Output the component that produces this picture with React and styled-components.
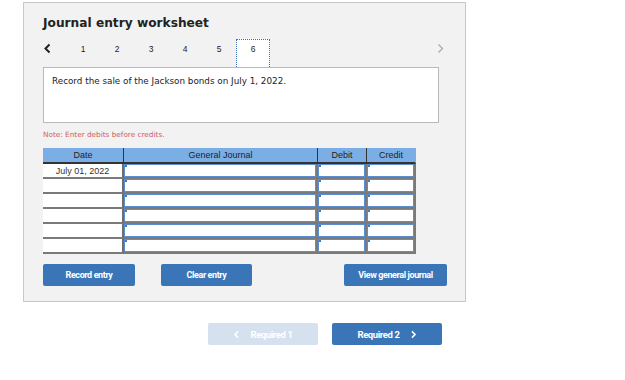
import React from 'react'
import styled, { createGlobalStyle } from 'styled-components'

const GlobalStyle = createGlobalStyle`
  body {
    margin: 0;
    background: #ffffff;
    font-family: "DejaVu Sans", Verdana, sans-serif;
  }
`

const Page = styled.div`
  width: 625px;
  height: 380px;
  padding: 2px 0 0 23px;
  box-sizing: border-box;
`

const Panel = styled.div`
  width: 443px;
  height: 300px;
  box-sizing: border-box;
  background: #f2f2f2;
  border: 1px solid #c8c8c8;
  padding: 12px 26px 0 19px;
`

const Title = styled.div`
  font-family: "DejaVu Sans", Verdana, sans-serif;
  font-weight: bold;
  font-size: 12.2px;
  color: #222;
  line-height: 16px;
  height: 24px;
`

const Tabs = styled.div`
  display: flex;
  align-items: flex-start;
  height: 28px;
`

const Chevron = styled.div`
  width: 23px;
  height: 28px;
  display: flex;
  align-items: flex-start;
  padding-top: 4px;
  box-sizing: border-box;
  color: ${p => (p.muted ? '#a8a8a8' : '#222')};
  svg { display: block; }
`

const Tab = styled.div`
  width: 34px;
  height: 28px;
  box-sizing: border-box;
  font-family: "Liberation Sans", Arial, sans-serif;
  font-size: 8.5px;
  color: #222;
  text-align: center;
  padding-top: 4px;
  background: ${p => (p.active ? '#ffffff' : 'transparent')};
  border: 1px ${p => (p.active ? 'dotted #3b6fb0' : 'solid transparent')};
  border-bottom: none;
`

const NextChevron = styled(Chevron)`
  margin-left: auto;
  width: auto;
  margin-right: -6px;
`

const Prompt = styled.div`
  height: 56px;
  box-sizing: border-box;
  background: #ffffff;
  border: 1px solid #b9b9b9;
  padding: 8px 8px;
  font-size: 8.8px;
  color: #222;
`

const Note = styled.div`
  margin-top: 7px;
  height: 18px;
  font-size: 7.3px;
  color: #d0605d;
`

const Grid = styled.div`
  display: grid;
  grid-template-columns: 81px 194px 49px 49px;
  width: 373px;
`

const Head = styled.div`
  height: 16px;
  box-sizing: border-box;
  background: #7aaee4;
  border-right: 1px solid ${p => (p.last ? 'transparent' : '#333')};
  border-bottom: 2px solid #333;
  font-family: "Liberation Sans", Arial, sans-serif;
  font-size: 9px;
  color: #222;
  text-align: center;
  line-height: 14px;
`

const DateCell = styled.div`
  height: 15px;
  box-sizing: border-box;
  background: #ffffff;
  border-right: 2px solid #6e6e6e;
  border-bottom: 2px solid #7a7a7a;
  font-family: "Liberation Sans", Arial, sans-serif;
  font-size: 9px;
  color: #333;
  text-align: center;
  line-height: 14px;
`

const InputCell = styled.div`
  height: 15px;
  box-sizing: border-box;
  border-right: 2px solid #7a7a7a;
  border-bottom: 2px solid #7a7a7a;
  display: flex;
  position: relative;
`

const Field = styled.div`
  flex: 1;
  background: #ffffff;
  border: 1px solid #5b8fd0;
`

const Marker = styled.span`
  position: absolute;
  left: 1px;
  top: 1px;
  width: 2px;
  height: 2px;
  background: #3b7bd0;
`

const Actions = styled.div`
  display: flex;
  margin-top: 10px;
  width: 404px;
`

const Button = styled.button`
  width: ${p => p.w}px;
  height: 22px;
  margin-left: ${p => p.gap || 0}px;
  border: none;
  border-radius: 2px;
  background: ${p => (p.disabled ? '#d5e1ef' : '#3a75b8')};
  color: #ffffff;
  font-family: Roboto, "Liberation Sans", Arial, sans-serif;
  font-weight: bold;
  font-size: ${p => p.fs || 9}px;
  letter-spacing: -0.4px;
  padding: 0;
  display: flex;
  align-items: center;
  justify-content: center;
  gap: 10px;
  svg { display: block; }
`

const Spacer = styled.div`
  flex: 1;
`

const Footer = styled.div`
  display: flex;
  gap: 14px;
  padding-left: 185px;
  margin-top: 21px;
`

const LeftArrow = ({ size = 9, stroke = 2 }) => (
  <svg width={size} height={size + 2} viewBox="0 0 9 11">
    <path d="M6.5 1.5 L2.5 5.5 L6.5 9.5" fill="none" stroke="currentColor" strokeWidth={stroke} />
  </svg>
)

const RightArrow = ({ size = 9, stroke = 2 }) => (
  <svg width={size} height={size + 2} viewBox="0 0 9 11">
    <path d="M2.5 1.5 L6.5 5.5 L2.5 9.5" fill="none" stroke="currentColor" strokeWidth={stroke} />
  </svg>
)

const rows = ['July 01, 2022', '', '', '', '', '']

export default function App() {
  return (
    <Page>
      <GlobalStyle />
      <Panel>
        <Title>Journal entry worksheet</Title>
        <Tabs>
          <Chevron><LeftArrow /></Chevron>
          {[1, 2, 3, 4, 5, 6].map(n => (
            <Tab key={n} active={n === 6}>{n}</Tab>
          ))}
          <NextChevron muted><RightArrow stroke={1.2} /></NextChevron>
        </Tabs>
        <Prompt>Record the sale of the Jackson bonds on July 1, 2022.</Prompt>
        <Note>Note: Enter debits before credits.</Note>
        <Grid>
          <Head>Date</Head>
          <Head>General Journal</Head>
          <Head>Debit</Head>
          <Head last>Credit</Head>
          {rows.map((d, i) => (
            <React.Fragment key={i}>
              <DateCell>{d}</DateCell>
              <InputCell><Field /><Marker /></InputCell>
              <InputCell><Field /><Marker /></InputCell>
              <InputCell><Field /><Marker /></InputCell>
            </React.Fragment>
          ))}
        </Grid>
        <Actions>
          <Button w={92}>Record entry</Button>
          <Button w={91} gap={26}>Clear entry</Button>
          <Spacer />
          <Button w={103}>View general journal</Button>
        </Actions>
      </Panel>
      <Footer>
        <Button w={110} fs={9.5} disabled><LeftArrow size={7} />Required 1</Button>
        <Button w={110} fs={9.5}>Required 2<RightArrow size={7} /></Button>
      </Footer>
    </Page>
  )
}
